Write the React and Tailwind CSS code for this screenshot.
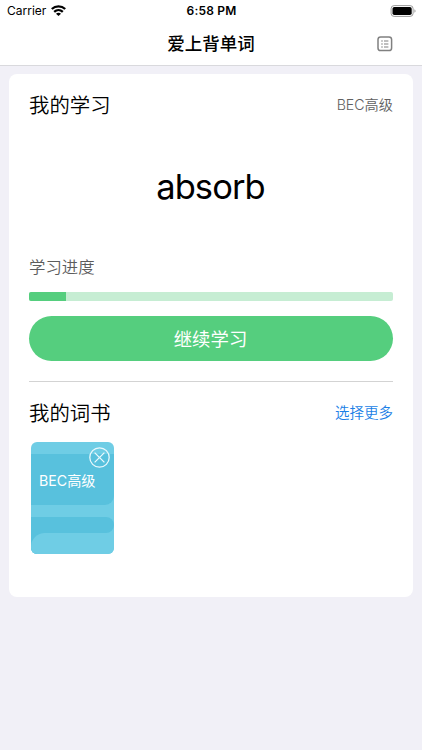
function StatusBar() {
  return (
    <div className="grid h-[22px] grid-cols-3 items-center pl-[7px] pr-[6px] text-black">
      <div className="flex items-center gap-[5px]">
        <span className="text-[12px] leading-[22px]">Carrier</span>
        <svg className="mb-[1px]" width="15" height="11" viewBox="0 0 15 11" fill="none" stroke="#000" strokeWidth="2.3">
          <path d="M0.8 4C4.6 0.4 10.4 0.4 14.2 4" />
          <path d="M3.2 6.8C5.7 4.5 9.3 4.5 11.8 6.8" />
          <path d="M7.5 11L5 8.7C6.4 7.5 8.6 7.5 10 8.7Z" fill="#000" stroke="none" />
        </svg>
      </div>
      <span className="text-center text-[12px] font-semibold leading-[22px] tracking-[0.2px]">6:58 PM</span>
      <svg className="justify-self-end" width="26" height="12" viewBox="0 0 26 12">
        <rect x="1.1" y="0.6" width="22" height="10.8" rx="3" fill="none" stroke="#9a9a9a" />
        <rect x="2.5" y="2" width="19.2" height="8" rx="1.8" fill="#000" />
        <path d="M24.5 4.2C25.8 4.7 25.8 7.2 24.5 7.7Z" fill="#8a8a8a" />
      </svg>
    </div>
  );
}

function ListIcon() {
  return (
    <svg width="16" height="16" viewBox="0 0 16 16" fill="none" stroke="#808080">
      <rect x="1" y="1" width="13.6" height="13.6" rx="2.6" strokeWidth="1.5" />
      <path d="M4.2 5H5.8M4.2 8H5.8M4.2 11H5.8M7 5H11.4M7 8H11.4M7 11H11.4" strokeWidth="1.2" />
    </svg>
  );
}

function WordBook({ title }) {
  return (
    <div className="relative ml-[2px] flex h-[112px] w-[83px] flex-col overflow-hidden rounded-[6px] bg-[#6fcde5]">
      <div className="mt-[12px] h-[51px] rounded-br-[9px] bg-[#58c1dd] pl-[8px] pt-[16px]">
        <span className="block whitespace-nowrap text-[14.2px] leading-[22px] text-white">{title}</span>
      </div>
      <div className="mt-[12px] h-[16px] rounded-r-[8px] bg-[#58c1dd]" />
      <div className="flex-1 bg-[linear-gradient(to_right,#58c1dd_16px,transparent_16px)]">
        <div className="h-full rounded-tl-[14px] bg-[#6fcde5]" />
      </div>
      <svg className="absolute right-[4.5px] top-[5px]" width="21" height="21" viewBox="0 0 21 21" fill="none" stroke="#e9f8fc" strokeWidth="1.3">
        <circle cx="10.5" cy="10.5" r="9.7" />
        <path d="M5.6 5.6L15.4 15.4M15.4 5.6L5.6 15.4" />
      </svg>
    </div>
  );
}

export default function App() {
  return (
    <div className="flex h-[750px] w-[422px] flex-col bg-[#f1f0f7] font-['Inter','Noto_Sans_CJK_SC',sans-serif]">
      <header className="h-[66px] border-b border-[#d9d9dd] bg-white">
        <StatusBar />
        <div className="grid h-[43px] grid-cols-[1fr_auto_1fr] items-center pr-[29px] pl-[29px]">
          <span />
          <h1 className="text-[17.5px] font-medium leading-[26px] text-black">爱上背单词</h1>
          <div className="justify-self-end"><ListIcon /></div>
        </div>
      </header>
      <main className="mx-[9px] mt-[8px] h-[523px] rounded-[8px] bg-white px-[20px]">
        <div className="flex h-[62px] items-center justify-between">
          <h2 className="pt-[1px] text-[20.4px] font-[350] leading-[30px] text-black">我的学习</h2>
          <span className="text-[14.2px] font-[350] leading-[22px] text-[#606060]">BEC高级</span>
        </div>
        <div className="flex h-[102px] items-center justify-center pr-[1px] text-[34.5px] leading-[44px] tracking-[-0.9px] text-black">absorb</div>
        <div className="mt-[17px] text-[16.4px] font-[350] leading-[24px] text-[#5c5c5c]">学习进度</div>
        <div className="mt-[13px] h-[9px] overflow-hidden rounded-[2px] bg-[#c6edd3]">
          <div className="h-full w-[10.1%] bg-[#55ce7e]" />
        </div>
        <button className="mt-[15px] flex h-[45px] w-full items-center justify-center rounded-full bg-[#55ce7e] pr-[1px] text-[18.4px] font-normal leading-[26px] text-white">继续学习</button>
        <div className="mt-[20px] h-px bg-[#d3d3d3]" />
        <div className="flex h-[60px] items-center justify-between pt-[2px]">
          <h2 className="pt-[2px] text-[20.4px] font-[350] leading-[30px] text-black">我的词书</h2>
          <span className="text-[14.5px] font-[350] leading-[22px] text-[#1b7fe6]">选择更多</span>
        </div>
        <WordBook title="BEC高级" />
      </main>
    </div>
  );
}
